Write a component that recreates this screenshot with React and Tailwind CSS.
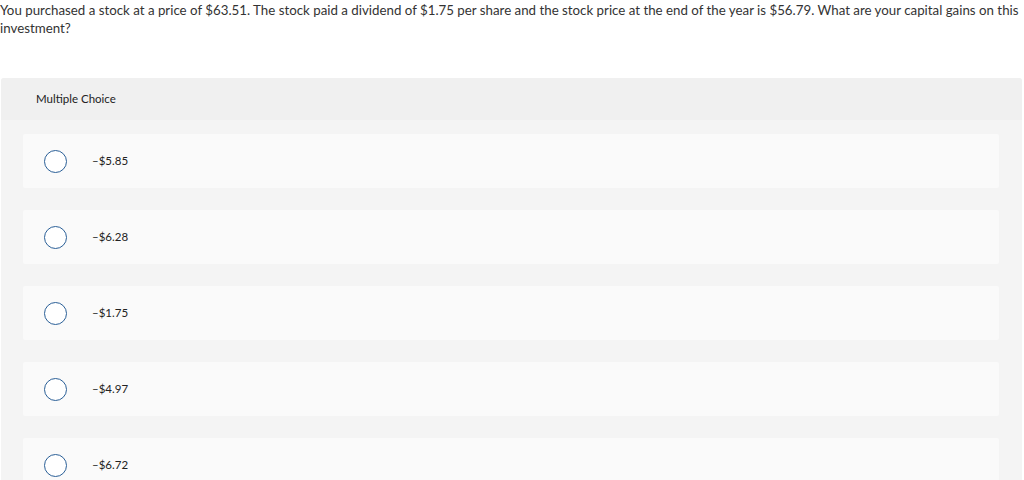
const choices = ['–$5.85', '–$6.28', '–$1.75', '–$4.97', '–$6.72'];

export default function App() {
  return (
    <div className="w-[1024px] h-[480px] overflow-hidden bg-white text-[#333] font-['Lato',sans-serif]">
      {/* Pregunta */}
      <p className="text-[13.3px] leading-[18px] pt-px">
        You purchased a stock at a price of $63.51. The stock paid a dividend of $1.75 per share and the stock price at the end of the year is $56.79. What are your capital gains on this investment?
      </p>

      {/* Panel de opciones */}
      <div className="mt-[41px] ml-px w-[1021px] rounded-t-[3px] bg-[#f4f4f4]">
        <div className="h-[42px] bg-[#f0f0f0] rounded-t-[3px] flex items-center pl-[35px]">
          <span className="text-[11.5px] text-[#222]">Multiple Choice</span>
        </div>
        <div className="pt-[14px] pl-[22px] pr-[23px] flex flex-col gap-[22px]">
          {choices.map((c) => (
            <Opcion key={c} label={c} />
          ))}
        </div>
      </div>
    </div>
  );
}

function Opcion({ label }) {
  return (
    <div className="h-[54px] bg-[#fafafa] rounded-[2px] flex items-center">
      <span className="ml-[21px] w-[23px] h-[23px] rounded-full border-[1.5px] border-[#2a5f97] bg-white flex-shrink-0" />
      <span className="ml-[25px] text-[11.5px] text-[#222]">{label}</span>
    </div>
  );
}
